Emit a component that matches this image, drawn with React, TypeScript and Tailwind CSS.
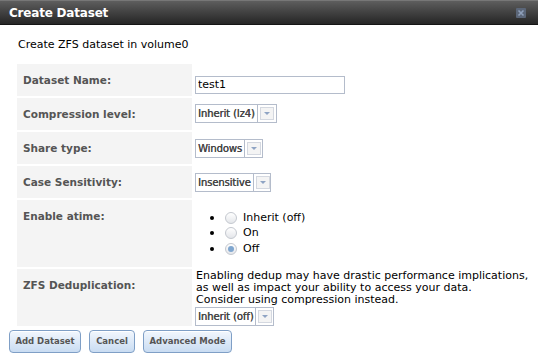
import { type ReactNode } from 'react';

const font = "font-['Verdana','DejaVu_Sans',sans-serif]";

function Select({ label, width }: { label: string; width: string }) {
  return (
    <div className={`flex h-[19px] border border-[#b4bccb] bg-white ${width}`}>
      <div className="flex flex-1 items-center whitespace-nowrap px-[2px] text-[10px] text-[#444] tracking-[-0.1px] [text-shadow:0.3px_0_0_#444]">{label}</div>
      <div className="flex w-[19px] shrink-0 items-center justify-center border-l border-[#b4bccb] p-[2px]">
        <div className="flex h-full w-full items-center justify-center border border-[#d4d8e0] bg-[#f4f4f4]">
          <div className="h-0 w-0 border-x-[3px] border-t-[3px] border-x-transparent border-t-[#8fa4c4]" />
        </div>
      </div>
    </div>
  );
}

function Radio({ checked }: { checked?: boolean }) {
  return (
    <span className="flex h-[12px] w-[12px] items-center justify-center rounded-full border border-[#c4c8cf] bg-gradient-to-b from-[#ffffff] to-[#e4e6ea]">
      {checked && <span className="h-[6px] w-[6px] rounded-full bg-[#7fa6cf]" />}
    </span>
  );
}

function Row({ label, height, children, valueClass }: { label: string; height: string; children: ReactNode; valueClass: string }) {
  return (
    <div className={`flex gap-[2px] ${height}`}>
      <div className="w-[175px] shrink-0 bg-[#f4f4f4] pl-[6px] pt-[10px] text-[10.5px] font-bold leading-[13px] text-[#555]">{label}</div>
      <div className={`flex-1 ${valueClass}`}>{children}</div>
    </div>
  );
}

function Button({ children, width }: { children: ReactNode; width: string }) {
  return (
    <button className={`h-[23px] ${width} whitespace-nowrap rounded-[4px] border border-[#7f9fc6] bg-gradient-to-b from-[#f2f7fd] to-[#c9dcf2] text-[8.5px] font-bold text-[#555] shadow-[inset_0_1px_0_#ffffff]`}>
      {children}
    </button>
  );
}

export default function App() {
  return (
    <div className={`h-[364px] w-[538px] overflow-hidden bg-white ${font} text-black`}>
      <div className="flex h-[25px] items-center justify-between border-t border-[#777] border-b border-b-[#151515] bg-gradient-to-b from-[#5e5e5e] to-[#262626] pl-[9px] pr-[12px]">
        <span className="text-[12px] font-bold tracking-[-0.2px] text-white">Create Dataset</span>
        <svg width="10" height="10" viewBox="0 0 10 10">
          <rect x="0" y="0" width="10" height="10" rx="1" fill="#5b6678" />
          <path d="M2.5 2.5 L7.5 7.5 M7.5 2.5 L2.5 7.5" stroke="#8fa0ba" strokeWidth="1.6" />
        </svg>
      </div>

      <div className="pl-[18px] pt-[13px] text-[11px] leading-[13px]">Create ZFS dataset in volume0</div>

      <div className="ml-[17px] mt-[13px] flex flex-col gap-[2px]">
        <Row label="Dataset Name:" height="h-[32px]" valueClass="pl-[1px] pt-[7px]">
          <input
            defaultValue="test1"
            className="h-[18px] w-[150px] border border-[#b4bccb] px-[2px] text-[11px] text-black outline-none"
          />
        </Row>
        <Row label="Compression level:" height="h-[32px]" valueClass="pl-[1px] pt-[6px]">
          <Select label="Inherit (lz4)" width="w-[82px]" />
        </Row>
        <Row label="Share type:" height="h-[32px]" valueClass="pl-[1px] pt-[7px]">
          <Select label="Windows" width="w-[68px]" />
        </Row>
        <Row label="Case Sensitivity:" height="h-[32px]" valueClass="pl-[1px] pt-[7px]">
          <Select label="Insensitive" width="w-[76px]" />
        </Row>
        <Row label="Enable atime:" height="h-[67px]" valueClass="pt-[10px]">
          <ul className="text-[11px]">
            {[
              { t: 'Inherit (off)' },
              { t: 'On' },
              { t: 'Off', checked: true },
            ].map((o) => (
              <li key={o.t} className="flex h-[15.5px] items-center">
                <span className="ml-[16px] mr-[11px] h-[4px] w-[4px] rounded-full bg-black" />
                <Radio checked={o.checked} />
                <span className="ml-[6px]">{o.t}</span>
              </li>
            ))}
          </ul>
        </Row>
        <Row label="ZFS Deduplication:" height="h-[57px]" valueClass="pl-[2px] pt-[1px]">
          <div className="text-[11px] leading-[12px]">
            Enabling dedup may have drastic performance implications,
            <br />
            as well as impact your ability to access your data.
            <br />
            Consider using compression instead.
          </div>
          <div className="mt-[1px] -ml-[1px]">
            <Select label="Inherit (off)" width="w-[79px]" />
          </div>
        </Row>
      </div>

      <div className="ml-[9px] mt-[4px] flex gap-[8px]">
        <Button width="w-[72px]">Add Dataset</Button>
        <Button width="w-[46px]">Cancel</Button>
        <Button width="w-[89px]">Advanced Mode</Button>
      </div>
    </div>
  );
}
